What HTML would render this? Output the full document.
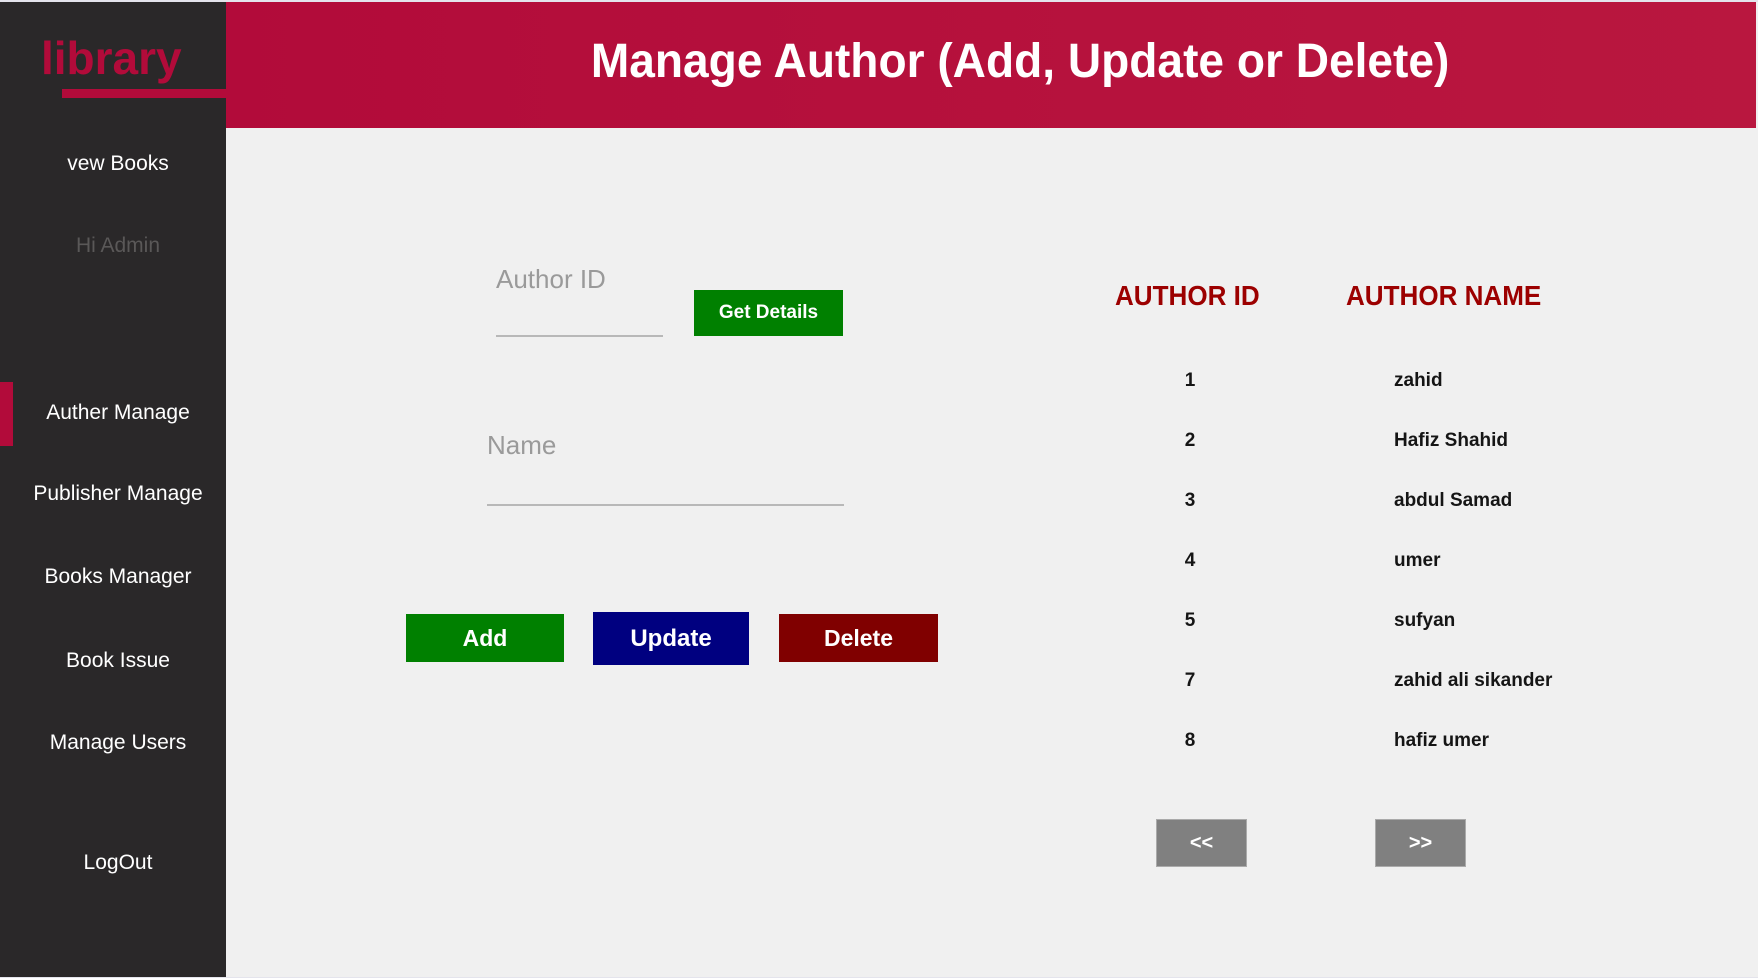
<!DOCTYPE html>
<html><head><meta charset="utf-8"><style>
*{margin:0;padding:0;box-sizing:border-box}
body{width:1758px;height:978px;background:#e4e4ec;position:relative;overflow:hidden;font-family:"Liberation Sans",sans-serif}
.abs{position:absolute}
#side{left:0;top:2px;width:226px;height:975px;background:#2a2829}
#main{left:226px;top:2px;width:1532px;height:975px;background:#f0f0f0}
#hdr{left:226px;top:2px;width:1530px;height:126px;background:linear-gradient(90deg,#b20b3a,#b9173f)}
.nav{position:absolute;left:0;width:236px;text-align:center;color:#fff;font-size:21px;line-height:24px}
.btn{position:absolute;color:#fff;font-weight:bold;text-align:center;display:flex;align-items:center;justify-content:center}
.lbl{position:absolute;color:#9a9a9a;font-size:26px}
.line{position:absolute;height:2px;background:#b8b8b8}
.id{position:absolute;left:1160px;width:60px;text-align:center;font-size:19px;color:#151515;font-weight:bold}
.nm{position:absolute;left:1394px;font-size:19px;color:#151515;font-weight:bold}
</style></head><body>
<div id="side" class="abs"></div>
<div id="main" class="abs"></div>
<div id="hdr" class="abs"></div>
<div class="abs" style="left:41px;top:30px;color:#b20b3a;font-size:46px;font-weight:bold;line-height:56px">library</div>
<div class="abs" style="left:62px;top:89px;width:164px;height:9px;background:#b20b3a"></div>
<div class="abs" style="left:226px;top:30px;width:1532px;text-align:center;color:#fff;font-size:48px;font-weight:bold;line-height:64px"><span style="display:inline-block;transform:scaleX(0.96);transform-origin:center;position:relative;left:28px">Manage Author (Add, Update or Delete)</span></div>

<div class="nav" style="top:152px">vew Books</div>
<div class="nav" style="top:234px;color:#5a5858">Hi Admin</div>
<div class="abs" style="left:0;top:382px;width:13px;height:64px;background:#b20b3a"></div>
<div class="nav" style="top:401px">Auther Manage</div>
<div class="nav" style="top:482px">Publisher Manage</div>
<div class="nav" style="top:565px">Books Manager</div>
<div class="nav" style="top:649px">Book Issue</div>
<div class="nav" style="top:731px">Manage Users</div>
<div class="nav" style="top:851px">LogOut</div>

<div class="lbl" style="left:496px;top:264px">Author ID</div>
<div class="line" style="left:496px;top:335px;width:167px"></div>
<div class="btn" style="left:694px;top:290px;width:149px;height:46px;background:#008000;font-size:19px">Get Details</div>
<div class="lbl" style="left:487px;top:430px">Name</div>
<div class="line" style="left:487px;top:504px;width:357px"></div>
<div class="btn" style="left:406px;top:614px;width:158px;height:48px;background:#008000;font-size:23px">Add</div>
<div class="btn" style="left:593px;top:612px;width:156px;height:53px;background:#000080;font-size:24px">Update</div>
<div class="btn" style="left:779px;top:614px;width:159px;height:48px;background:#800000;font-size:23px">Delete</div>

<div class="abs" style="left:1115px;top:280px;color:#9c0000;font-size:28px;font-weight:bold;transform:scaleX(0.93);transform-origin:left">AUTHOR ID</div>
<div class="abs" style="left:1346px;top:280px;color:#9c0000;font-size:28px;font-weight:bold;transform:scaleX(0.93);transform-origin:left">AUTHOR NAME</div>

<div class="id" style="top:370px">1</div><div class="nm" style="top:370px">zahid</div>
<div class="id" style="top:430px">2</div><div class="nm" style="top:430px">Hafiz Shahid</div>
<div class="id" style="top:490px">3</div><div class="nm" style="top:490px">abdul Samad</div>
<div class="id" style="top:550px">4</div><div class="nm" style="top:550px">umer</div>
<div class="id" style="top:610px">5</div><div class="nm" style="top:610px">sufyan</div>
<div class="id" style="top:670px">7</div><div class="nm" style="top:670px">zahid ali sikander</div>
<div class="id" style="top:730px">8</div><div class="nm" style="top:730px">hafiz umer</div>

<div class="btn" style="left:1156px;top:819px;width:91px;height:48px;background:#808080;border:1px solid #aaa;font-size:20px">&lt;&lt;</div>
<div class="btn" style="left:1375px;top:819px;width:91px;height:48px;background:#808080;border:1px solid #aaa;font-size:20px">&gt;&gt;</div>
</body></html>
